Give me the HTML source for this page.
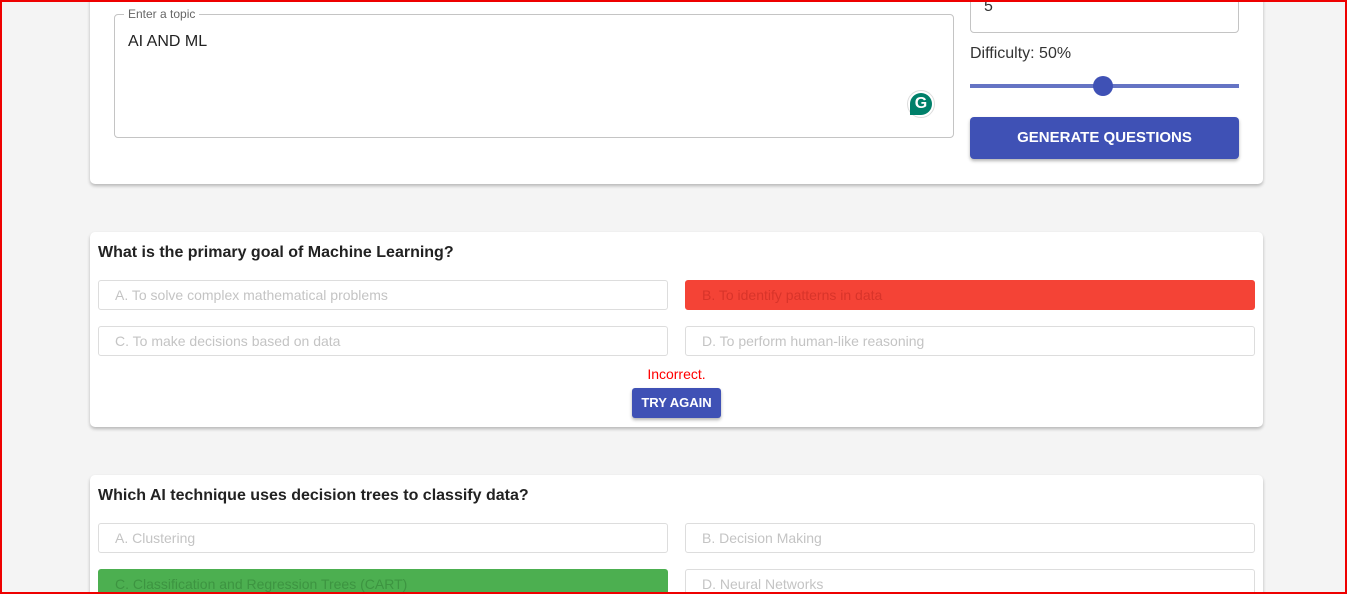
<!DOCTYPE html>
<html style="overflow:hidden;width:1347px;height:594px"><head><style>
*{box-sizing:border-box;margin:0;padding:0}
body{width:1347px;height:594px;overflow:hidden;background:#f4f4f4;font-family:"Liberation Sans",Arial,sans-serif;position:relative}
.frame{position:absolute;left:0;top:0;width:1347px;height:594px;border:2px solid #e00;z-index:10;pointer-events:none}
.card{position:absolute;left:90px;width:1173px;background:#fff;border-radius:5px;box-shadow:0 2px 3px rgba(0,0,0,.25)}
.ab{position:absolute}
.q{position:absolute;left:8px;font-size:16px;font-weight:bold;color:#222}
.opt{position:absolute;height:30px;border:1px solid #ddd;border-radius:3px;font-size:14px;color:#c4c4c4;padding:6px 16px;width:570px}
</style></head><body>
<div class="frame"></div>
<div class="card" style="top:-10px;height:194px">
  <div class="ab" style="left:24px;top:24px;width:840px;height:124px;border:1px solid #c4c4c4;border-radius:4px"></div>
  <div class="ab" style="left:34px;top:17px;background:#fff;padding:0 4px;font-size:12px;color:#666">Enter a topic</div>
  <div class="ab" style="left:38px;top:43px;font-size:16px;color:#222">AI AND ML</div>
  <div class="ab" style="left:817px;top:100px;width:28px;height:28px;border-radius:50%;border:1px solid #ddd;background:#fff"></div>
  <div class="ab" style="left:820px;top:103px;width:22px;height:22px;border-radius:50% 50% 50% 0;background:#00806a;color:#fff;font-weight:bold;font-size:16px;text-align:center;line-height:22px">G</div>
  <div class="ab" style="left:880px;top:-10px;width:269px;height:53px;border:1px solid #c4c4c4;border-radius:4px"></div>
  <div class="ab" style="left:894px;top:8px;font-size:16px;color:#333">5</div>
  <div class="ab" style="left:880px;top:55px;font-size:16px;color:#333">Difficulty: 50%</div>
  <div class="ab" style="left:880px;top:94px;width:269px;height:4px;background:#3f51b5;opacity:.8"></div>
  <div class="ab" style="left:1003px;top:86px;width:20px;height:20px;border-radius:50%;background:#3f51b5"></div>
  <div class="ab" style="left:880px;top:127px;width:269px;height:42px;background:#3f51b5;border-radius:4px;color:#fff;font-weight:bold;font-size:15px;text-align:center;line-height:42px;box-shadow:0 2px 3px rgba(0,0,0,.3)">GENERATE QUESTIONS</div>
</div>
<div class="card" style="top:232px;height:195px">
  <div class="q" style="top:12px">What is the primary goal of Machine Learning?</div>
  <div class="opt" style="left:8px;top:48px">A. To solve complex mathematical problems</div>
  <div class="opt" style="left:595px;top:48px;background:#f44336;border-color:#f44336;color:#d8342a">B. To identify patterns in data</div>
  <div class="opt" style="left:8px;top:94px">C. To make decisions based on data</div>
  <div class="opt" style="left:595px;top:94px">D. To perform human-like reasoning</div>
  <div class="ab" style="left:0;width:100%;top:134px;text-align:center;font-size:14px;color:#f00">Incorrect.</div>
  <div class="ab" style="left:542px;top:156px;width:89px;height:30px;background:#3f51b5;border-radius:3px;color:#fff;font-weight:bold;font-size:13px;text-align:center;line-height:30px;box-shadow:0 2px 3px rgba(0,0,0,.3)">TRY AGAIN</div>
</div>
<div class="card" style="top:475px;height:119px;border-radius:5px 5px 0 0">
  <div class="q" style="top:12px">Which AI technique uses decision trees to classify data?</div>
  <div class="opt" style="left:8px;top:48px">A. Clustering</div>
  <div class="opt" style="left:595px;top:48px">B. Decision Making</div>
  <div class="opt" style="left:8px;top:94px;background:#4caf50;border-color:#4caf50;color:#3d9441">C. Classification and Regression Trees (CART)</div>
  <div class="opt" style="left:595px;top:94px">D. Neural Networks</div>
</div>
</body></html>
